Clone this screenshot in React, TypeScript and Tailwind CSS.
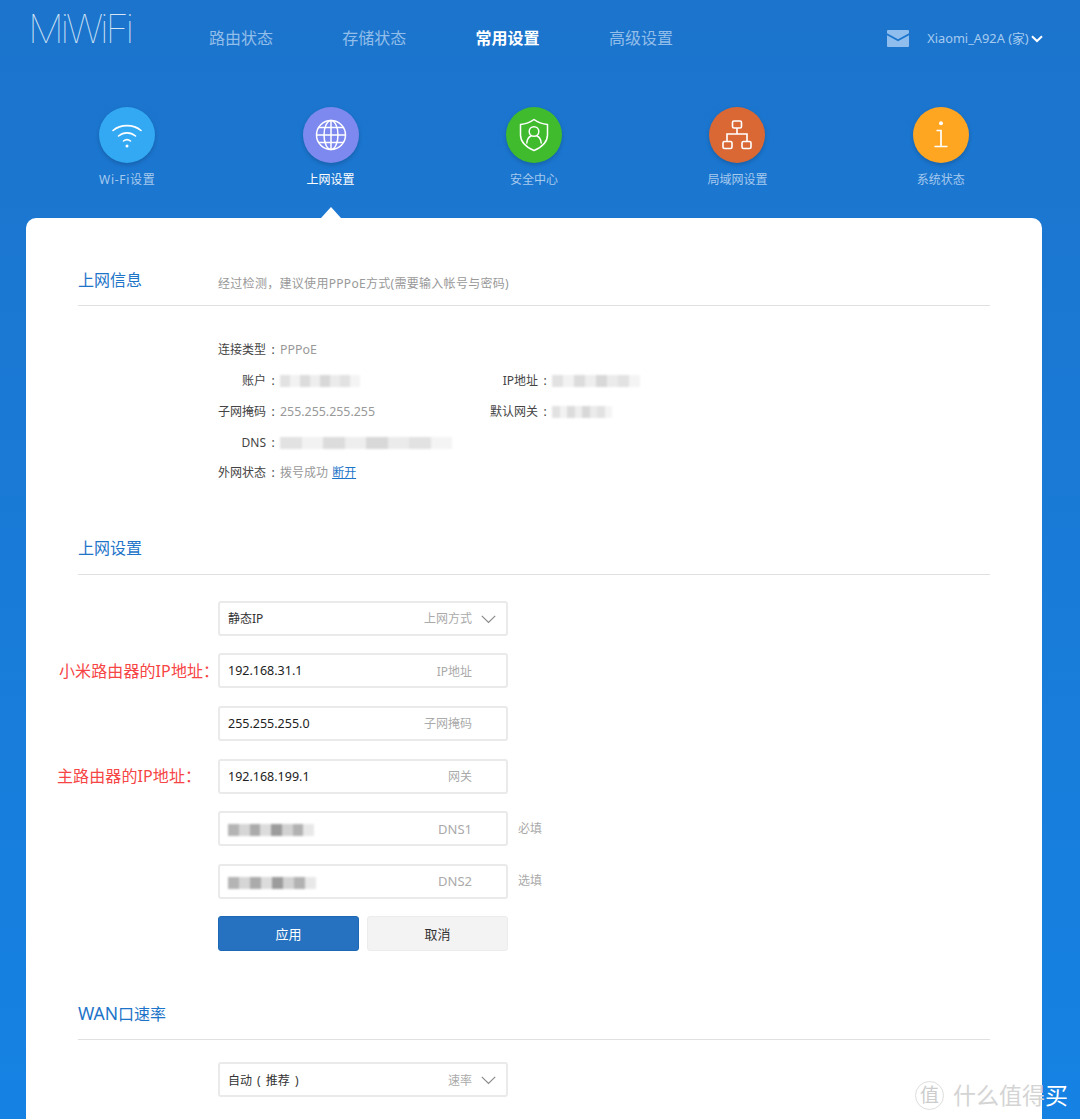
const NAV = [
  { label: "路由状态", active: false },
  { label: "存储状态", active: false },
  { label: "常用设置", active: true },
  { label: "高级设置", active: false },
];

const MOSAIC_A = ["#e2e2e2", "#f2f2f2", "#dcdcdc", "#eeeeee", "#d8d8d8", "#ebebeb", "#e2e2e2", "#f4f4f4"];
const MOSAIC_B = ["#b4b4b4", "#d6d6d6", "#ababab", "#dcdcdc", "#9c9c9c", "#d2d2d2", "#b2b2b2", "#e8e8e8"];

function Mosaic({ width, colors }: { width: number; colors: string[] }) {
  const cell = width / colors.length;
  return (
    <span className="inline-flex h-[12px] align-middle blur-[1px]">
      {colors.map((c, i) => (
        <span key={i} className="h-full" style={{ width: cell, backgroundColor: c }} />
      ))}
    </span>
  );
}

function WifiIcon() {
  return (
    <svg width="30" height="28" viewBox="0 0 30 28" fill="none" stroke="white" strokeLinecap="round">
      <path d="M1 9.5C8.5 3 21.5 3 29 9.5" strokeWidth="1.6" />
      <path d="M6.5 15C11.5 10.8 18.5 10.8 23.5 15" strokeWidth="1.6" />
      <path d="M11.5 20C13.5 18.4 16.5 18.4 18.5 20" strokeWidth="1.6" />
      <circle cx="15" cy="25" r="1.5" fill="white" stroke="none" />
    </svg>
  );
}

function GlobeIcon() {
  return (
    <svg width="32" height="32" viewBox="0 0 32 32" fill="none" stroke="white" strokeWidth="1.5">
      <circle cx="16" cy="16" r="14.5" />
      <ellipse cx="16" cy="16" rx="7" ry="14.5" />
      <path d="M16 1.5V30.5M1.5 16H30.5M4 8.5H28M4 23.5H28" />
    </svg>
  );
}

function ShieldIcon() {
  return (
    <svg width="30" height="34" viewBox="0 0 30 34" fill="none" stroke="white" strokeWidth="1.5" strokeLinejoin="round">
      <path d="M15 1.5C19 4.5 23.5 6 28.5 6.5V17C28.5 24.5 22 29.5 15 32.5C8 29.5 1.5 24.5 1.5 17V6.5C6.5 6 11 4.5 15 1.5Z" />
      <circle cx="15" cy="13.5" r="4.8" />
      <path d="M7.8 25C8.2 20.8 10.5 18.6 12 18M22.2 25C21.8 20.8 19.5 18.6 18 18" strokeLinecap="round" />
    </svg>
  );
}

function LanIcon() {
  return (
    <svg width="30" height="30" viewBox="0 0 30 30" fill="none" stroke="white" strokeWidth="1.6">
      <rect x="10.5" y="1" width="9" height="7" rx="1.5" />
      <path d="M15 8V14M5 21V14H25V21" />
      <rect x="1" y="21.5" width="9" height="7" rx="1.5" />
      <rect x="20" y="21.5" width="9" height="7" rx="1.5" />
    </svg>
  );
}

function InfoIcon() {
  return (
    <svg width="14" height="28" viewBox="0 0 14 28" fill="none" stroke="white" strokeWidth="1.7">
      <circle cx="7" cy="2.2" r="2" fill="white" stroke="none" />
      <path d="M2.5 9.5H7V25.5M0.5 25.5H13.5" />
    </svg>
  );
}

const TILES = [
  { label: "Wi-Fi设置", color: "bg-[#33a8f3]", icon: <WifiIcon />, active: false, wide: true },
  { label: "上网设置", color: "bg-[#7d89ef]", icon: <GlobeIcon />, active: true, wide: false },
  { label: "安全中心", color: "bg-[#3fbb2d]", icon: <ShieldIcon />, active: false, wide: false },
  { label: "局域网设置", color: "bg-[#d96835]", icon: <LanIcon />, active: false, wide: false },
  { label: "系统状态", color: "bg-[#fea522]", icon: <InfoIcon />, active: false, wide: false },
];

function Chevron() {
  return (
    <svg width="15" height="9" viewBox="0 0 15 9" fill="none" stroke="#8a8a8a" strokeWidth="1.2">
      <path d="M0.8 0.8L7.5 7.5L14.2 0.8" />
    </svg>
  );
}

function SectionHead({ title, desc }: { title: React.ReactNode; desc?: string }) {
  return (
    <div className="flex h-[52px] items-center border-b border-[#e0e0e0] pb-[2px]">
      <h2 className={desc ? "mt-[2px] w-[140px] text-[16px] font-normal text-[#1d74c8]" : "w-[140px] text-[16px] font-normal text-[#1d74c8]"}>
        {title}
      </h2>
      {desc && <p className="mt-[10px] text-[12px] tracking-[0.3px] text-[#999]">{desc}</p>}
    </div>
  );
}

function InfoRow({ label, children }: { label: string; children: React.ReactNode }) {
  return (
    <div className="flex h-[30.75px] items-center">
      <span className="w-[62px] whitespace-nowrap text-right text-[12px] text-[#444]">
        {label}
        <span className="inline-block w-[14px] text-center">:</span>
      </span>
      <span className="text-[12.4px] text-[#999]">{children}</span>
    </div>
  );
}

function Field({
  children,
  hint,
  select,
  note,
  annotation,
  annotationClass,
}: {
  children: React.ReactNode;
  hint: React.ReactNode;
  select?: boolean;
  note?: string;
  annotation?: string;
  annotationClass?: string;
}) {
  return (
    <div className="relative flex items-center">
      {annotation && (
        <span className={`absolute whitespace-nowrap text-[16px] tracking-[0.1px] text-[#f64545] ${annotationClass}`}>
          {annotation}
        </span>
      )}
      <div className="flex h-[35px] w-[290px] items-center rounded-[3px] border-2 border-[#eaeaea] bg-white pl-[8px] pr-[10px] pt-[2px]">
        <span className={select ? "text-[12px] text-[#333] [word-spacing:2px]" : "text-[12.5px] text-[#222]"}>{children}</span>
        <span className="ml-auto mr-[9px] text-[12px] text-[#aaa]">{hint}</span>
        {select ? <Chevron /> : <span className="w-[15px]" />}
      </div>
      {note && <span className="ml-[10px] text-[12px] text-[#aaa]">{note}</span>}
    </div>
  );
}

export default function App() {
  return (
    <div className="relative h-[1119px] w-[1080px] overflow-hidden bg-gradient-to-b from-[#1c74cc] to-[#1582e3] font-['Noto_Sans','Noto_Sans_CJK_SC',sans-serif]">
      {/* top nav */}
      <header className="flex h-[76px] items-start">
        <div className="ml-[28px] mt-[4px] w-[181px] font-['Inter',sans-serif] text-[40px] font-thin leading-[50px] tracking-[-3.2px] text-[#d5e5f6]">
          MiWiFi
        </div>
        <nav className="mt-[27px] flex">
          {NAV.map((n) => (
            <a
              key={n.label}
              className={
                n.active
                  ? "w-[133.3px] text-[16px] font-bold leading-[22px] text-white"
                  : "w-[133.3px] text-[16px] leading-[22px] text-[#92bee9]"
              }
            >
              {n.label}
            </a>
          ))}
        </nav>
        <div className="ml-[145px] mt-[29px] flex items-center">
          <svg width="22" height="17" viewBox="0 0 22 17" className="mr-[18px]">
            <path d="M1 0H21A1 1 0 0 1 22 1V3.2L11 9.2L0 3.2V1A1 1 0 0 1 1 0Z" fill="#8fbeee" />
            <path d="M0 5.2L11 11.2L22 5.2V16A1 1 0 0 1 21 17H1A1 1 0 0 1 0 16Z" fill="#8fbeee" />
          </svg>
          <span className="text-[12.8px] text-[#a5cbf0]">Xiaomi_A92A (家)</span>
          <svg width="12" height="8" viewBox="0 0 12 8" fill="none" stroke="white" strokeWidth="2" className="ml-[2px]">
            <path d="M1 1.2L6 6L11 1.2" />
          </svg>
        </div>
      </header>

      {/* icon tiles */}
      <div className="ml-[25.5px] grid h-[142px] w-[1017px] grid-cols-5 pt-[31px]">
        {TILES.map((t) => (
          <div key={t.label} className="relative flex flex-col items-center">
            <div className={`flex h-[56px] w-[56px] items-center justify-center rounded-full shadow-[0_2px_4px_rgba(0,0,0,0.18)] ${t.color}`}>
              {t.icon}
            </div>
            <span className={`mt-[8px] text-[12px] leading-[18px] ${t.active ? "text-white" : "text-[#a6c9ee]"} ${t.wide ? "tracking-[0.7px]" : ""}`}>
              {t.label}
            </span>
            {t.active && (
              <span className="absolute bottom-0 h-0 w-0 border-x-[10px] border-b-[11px] border-x-transparent border-b-white" />
            )}
          </div>
        ))}
      </div>

      {/* main card */}
      <main className="ml-[26px] h-[1000px] w-[1016px] rounded-t-[10px] bg-white px-[52px] pt-[36px]">
        <SectionHead title="上网信息" desc="经过检测，建议使用PPPoE方式(需要输入帐号与密码)" />
        <div className="ml-[140px] mt-[29px] grid grid-cols-[272px_1fr]">
          <div className="col-span-2">
            <InfoRow label="连接类型">PPPoE</InfoRow>
          </div>
          <InfoRow label="账户">
            <Mosaic width={80} colors={MOSAIC_A} />
          </InfoRow>
          <InfoRow label="IP地址">
            <Mosaic width={88} colors={MOSAIC_A} />
          </InfoRow>
          <InfoRow label="子网掩码">255.255.255.255</InfoRow>
          <InfoRow label="默认网关">
            <Mosaic width={60} colors={MOSAIC_A} />
          </InfoRow>
          <div className="col-span-2">
            <InfoRow label="DNS">
              <Mosaic width={172} colors={MOSAIC_A} />
            </InfoRow>
          </div>
          <div className="col-span-2">
            <InfoRow label="外网状态">
              <span className="text-[12px]">
                拨号成功 <a className="ml-[1px] text-[#1d74c8] underline">断开</a>
              </span>
            </InfoRow>
          </div>
        </div>

        <div className="mt-[34px]">
          <SectionHead title={<span className="block pt-[2px]">上网设置</span>} />
        </div>
        <div className="ml-[140px] mt-[26px] flex flex-col gap-[17.6px]">
          <Field hint="上网方式" select>
            静态IP
          </Field>
          <Field hint="IP地址" annotation="小米路由器的IP地址：" annotationClass="left-[-159px]">
            192.168.31.1
          </Field>
          <Field hint="子网掩码">255.255.255.0</Field>
          <Field hint="网关" annotation="主路由器的IP地址：" annotationClass="left-[-161px]">
            192.168.199.1
          </Field>
          <Field hint={<span className="text-[13px]">DNS1</span>} note="必填">
            <Mosaic width={86} colors={MOSAIC_B} />
          </Field>
          <Field hint={<span className="text-[13px]">DNS2</span>} note="选填">
            <Mosaic width={88} colors={MOSAIC_B} />
          </Field>
          <div className="flex w-[290px] gap-[8px]">
            <button className="h-[35px] w-[141px] rounded-[3px] border border-[#1c68b4] bg-[#2672c0] pt-[2px] text-[13px] text-white">
              应用
            </button>
            <button className="h-[35px] w-[141px] rounded-[3px] border border-[#ececec] bg-[#f3f3f3] pt-[2px] text-[13px] text-[#333]">
              取消
            </button>
          </div>
        </div>

        <div className="mt-[37px]">
          <SectionHead title={<><span className="text-[17.5px]">WAN</span>口速率</>} />
        </div>
        <div className="ml-[140px] mt-[22px]">
          <Field hint="速率" select>
            自动 ( 推荐 )
          </Field>
        </div>
      </main>

      {/* watermark */}
      <div className="absolute bottom-[9px] left-[915px] flex items-center">
        <span className="mr-[9px] flex h-[29px] w-[29px] items-center justify-center rounded-full border border-[#ddd] text-[19px] leading-none text-[#ccc]">
          值
        </span>
        <span className="text-[23px] leading-[30px] text-[#d4d4d4]">什么值得</span>
        <span className="text-[23px] leading-[30px] text-white">买</span>
      </div>
    </div>
  );
}
